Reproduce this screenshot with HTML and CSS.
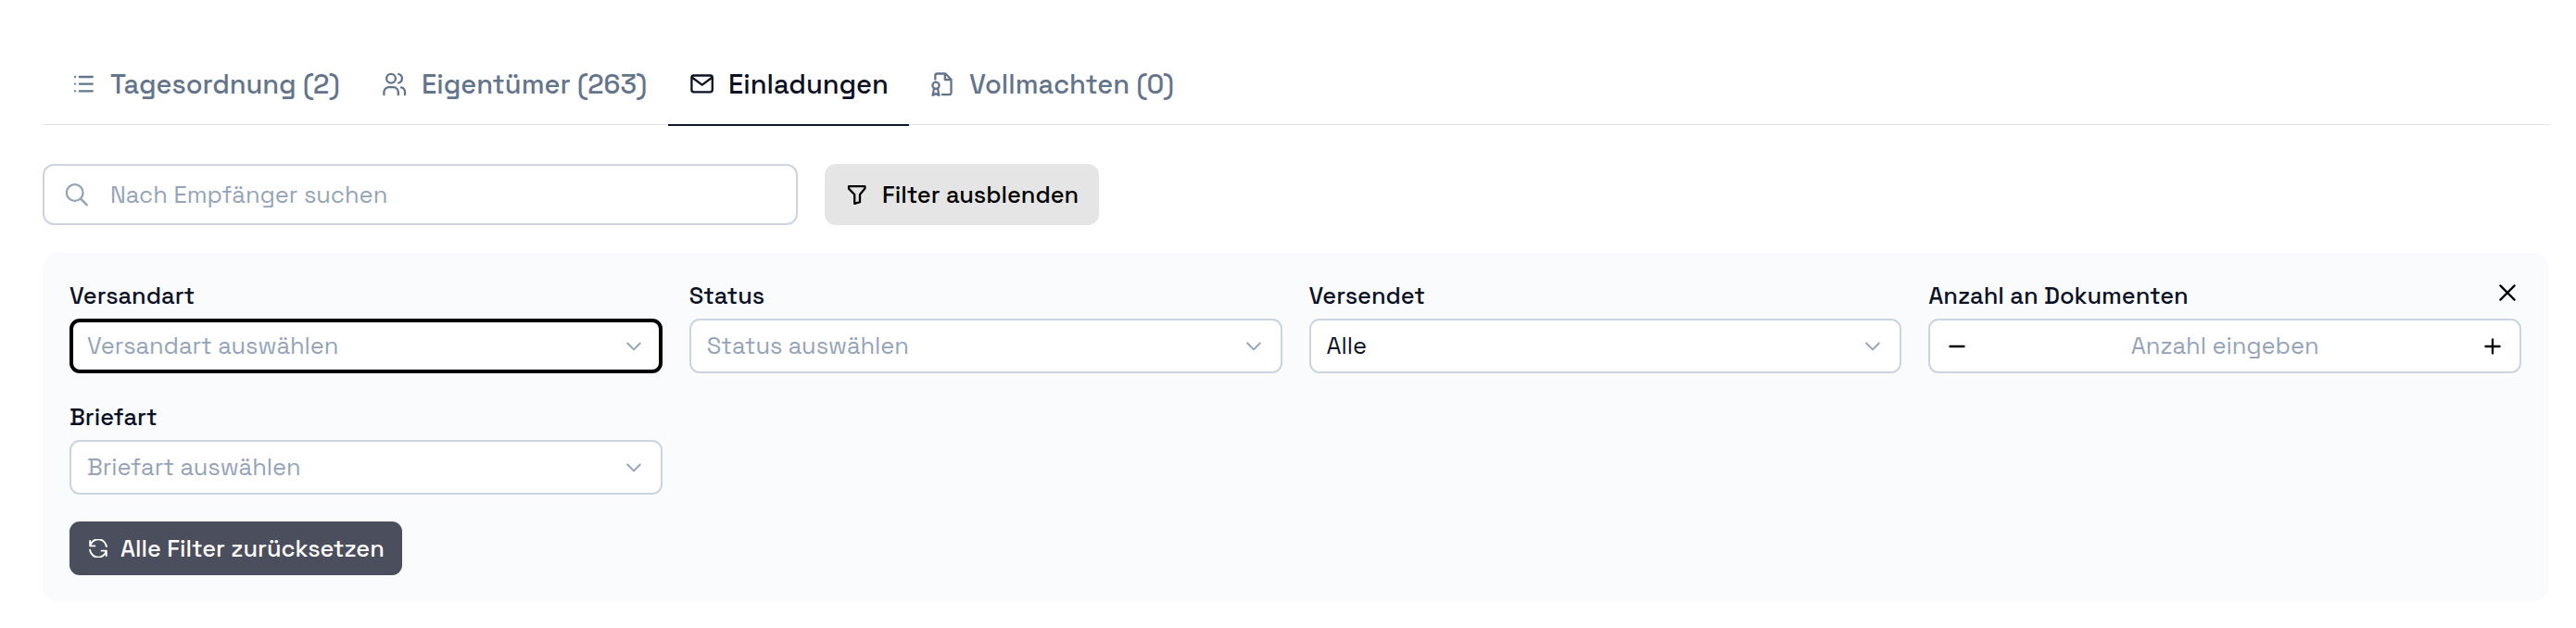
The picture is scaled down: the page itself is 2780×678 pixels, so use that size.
FILE: index.html
```html
<!DOCTYPE html>
<html lang="de">
<head>
  <meta charset="UTF-8" />
  <title>Einladungen</title>
  <meta name="viewport" content="width=device-width, initial-scale=1.0" />
  <link rel="stylesheet" href="styles.css">
</head>
<body>

  <!-- Tabs -->
  <nav class="tabs">
    <a class="tab tab-agenda">
      <svg class="icon" viewBox="0 0 28 28"><path d="M9.8 6H23.8M9.8 13.6H23.8M9.8 21.3H23.8M5 6h.01M5 13.6h.01M5 21.3h.01"/></svg>
      <span>Tagesordnung (2)</span>
    </a>
    <a class="tab tab-owners">
      <svg class="icon" viewBox="0 0 28 28"><circle cx="10" cy="7.7" r="4.9"/><path d="M2.4 25.3v-2.8a5.3 5.3 0 0 1 5.3-5.3h4.8a5.3 5.3 0 0 1 5.3 5.3v2.8M18.2 3a4.9 4.9 0 0 1 0 9.5M25 25.3v-2.8a5.2 5.2 0 0 0-4-5.1"/></svg>
      <span>Eigentümer (263)</span>
    </a>
    <a class="tab tab-invites active">
      <svg class="icon" viewBox="0 0 28 28"><rect x="3.4" y="4.5" width="22.4" height="17.8" rx="2.3"/><path d="M4.4 7l10.3 7.6L25 7"/></svg>
      <span>Einladungen</span>
    </a>
    <a class="tab tab-proxies">
      <svg class="icon" viewBox="0 0 28 28"><path d="M6.3 8.6V4.8a2.3 2.3 0 0 1 2.3-2.3h8.7l6.2 6.2v14.4a2.1 2.1 0 0 1-2.1 2.1h-7.6M16.8 2.5V9h6.7M5 18.6l-1.4 7.3L7 24l3.4 1.9L9 18.6"/><circle cx="7" cy="15.3" r="3.6"/></svg>
      <span>Vollmachten (0)</span>
    </a>
  </nav>

  <!-- Search -->
  <div class="toolbar">
    <label class="search">
      <svg class="icon" viewBox="0 0 28 28"><circle cx="12.7" cy="12" r="8.9"/><path d="M19.2 18.6l6.6 6.8"/></svg>
      <input type="text" placeholder="Nach Empfänger suchen" />
    </label>
    <button class="filter-toggle">
      <svg class="icon" viewBox="0 0 28 28"><path d="M5 5.2h17.4v2.4L17 14v8.2l-5.8 1.6V14L5 7.6z"/></svg>
      <span>Filter ausblenden</span>
    </button>
  </div>

  <!-- Filter panel -->
  <section class="panel">
    <button class="close">
      <svg viewBox="0 0 20 20"><path d="M2.4 2.4l15.2 15.2M17.6 2.4L2.4 17.6"/></svg>
    </button>
    <div class="filters">
      <div class="field">
        <label class="label">Versandart</label>
        <div class="select focused">
          <span class="placeholder">Versandart auswählen</span>
          <svg class="chevron" viewBox="0 0 16 10"><path d="M1.2 1.5L8 8.3l6.8-6.8"/></svg>
        </div>
      </div>
      <div class="field">
        <label class="label">Status</label>
        <div class="select">
          <span class="placeholder">Status auswählen</span>
          <svg class="chevron" viewBox="0 0 16 10"><path d="M1.2 1.5L8 8.3l6.8-6.8"/></svg>
        </div>
      </div>
      <div class="field">
        <label class="label">Versendet</label>
        <div class="select">
          <span>Alle</span>
          <svg class="chevron" viewBox="0 0 16 10"><path d="M1.2 1.5L8 8.3l6.8-6.8"/></svg>
        </div>
      </div>
      <div class="field">
        <label class="label">Anzahl an Dokumenten</label>
        <div class="select stepper">
          <svg class="step" viewBox="0 0 20 20"><path d="M2.4 10h15.2"/></svg>
          <span class="placeholder">Anzahl eingeben</span>
          <svg class="step" viewBox="0 0 20 20"><path d="M2.4 10h15.2M10 2.4v15.2"/></svg>
        </div>
      </div>
      <div class="field">
        <label class="label">Briefart</label>
        <div class="select">
          <span class="placeholder">Briefart auswählen</span>
          <svg class="chevron" viewBox="0 0 16 10"><path d="M1.2 1.5L8 8.3l6.8-6.8"/></svg>
        </div>
      </div>
    </div>
    <button class="reset">
      <svg viewBox="0 0 20 20"><path d="M1.2 7.4A9 9 0 0 1 18.9 8M1.2 2v5.4h5.2M1.1 11.8A9 9 0 0 0 18.8 12.6M18.8 18v-5.4h-5.2"/></svg>
      <span>Alle Filter zurücksetzen</span>
    </button>
  </section>

</body>
</html>
```
FILE: styles.css
```css
* {
  box-sizing: border-box;
}
body {
  margin: 0;
  padding: 48px 29px 0 46px;
  background: #fff;
  color: #0b1024;
  font-family: "Space Grotesk", Inter, sans-serif;
  font-size: 25.4px;
}
svg {
  display: block;
  flex: none;
  fill: none;
  stroke: currentColor;
  stroke-width: 2.3;
  stroke-linecap: round;
  stroke-linejoin: round;
}
.icon {
  width: 28px;
  height: 28px;
}
button {
  border: none;
  font: inherit;
  font-weight: 500;
  cursor: pointer;
}

/* tabs */
.tabs {
  display: flex;
  height: 87px;
  padding-left: 8px;
  border-bottom: 1px solid #dfe4ec;
}
.tab {
  display: flex;
  align-items: center;
  gap: 15px;
  height: 88px;
  padding: 0 22px 2px;
  color: #64748b;
  font-size: 29px;
  font-weight: 500;
  white-space: nowrap;
}
.tab span {
  padding-bottom: 2px;
}
.tab-agenda {
  width: 336px;
}
.tab-owners {
  width: 331px;
}
.tab-invites {
  width: 260px;
}
.tab-proxies {
  width: 310px;
}
.tab.active {
  padding-bottom: 0;
  border-bottom: 2px solid #0f172a;
  color: #0b1024;
}

/* search + toggle */
.toolbar {
  display: flex;
  gap: 29px;
  margin-top: 42px;
}
.search {
  display: flex;
  align-items: center;
  gap: 23px;
  width: 815px;
  height: 66px;
  padding: 0 20px;
  border: 2px solid #cbd5e1;
  border-radius: 12px;
  color: #94a3b8;
}
.search input {
  flex: 1;
  padding: 0;
  border: none;
  outline: none;
  background: none;
  font: inherit;
}
input::placeholder,
.placeholder {
  color: #94a3b8;
}
.filter-toggle {
  display: flex;
  align-items: center;
  gap: 13px;
  width: 296px;
  height: 66px;
  padding: 0 21px;
  border-radius: 12px;
  background: #e5e5e5;
  color: #000;
  white-space: nowrap;
}

/* filter panel */
.panel {
  position: relative;
  height: 376px;
  margin-top: 30px;
  padding: 31px 30px 0 29px;
  border-radius: 16px;
  background: #f9fbfd;
}
.close {
  position: absolute;
  top: 33px;
  right: 35px;
  padding: 0;
  background: none;
  color: #000;
}
.close svg,
.step {
  width: 20px;
  height: 20px;
}
.filters {
  display: grid;
  grid-template-columns: repeat(4, 1fr);
  gap: 32px 29px;
}
.label {
  display: block;
  height: 40px;
  line-height: 30px;
  font-weight: 500;
}
.select {
  display: flex;
  align-items: center;
  justify-content: space-between;
  height: 59px;
  padding: 0 21px 0 17px;
  border: 2px solid #cbd5e1;
  border-radius: 11px;
  background: #fff;
}
.select span {
  padding-bottom: 2px;
}
.focused {
  padding: 0 19px 0 15px;
  border: 4px solid #000;
}
.chevron {
  width: 16px;
  height: 10px;
  color: #94a3b8;
  stroke-width: 1.9;
}
.stepper {
  padding: 0 19px;
}
.step {
  color: #000;
}
.reset {
  display: flex;
  align-items: center;
  gap: 14px;
  width: 359px;
  height: 58px;
  margin-top: 29px;
  padding: 0 21px;
  border-radius: 11px;
  background: #4b4e5d;
  color: #fff;
  white-space: nowrap;
}
.reset svg {
  width: 20px;
  height: 20px;
  stroke-width: 1.9;
}
```
